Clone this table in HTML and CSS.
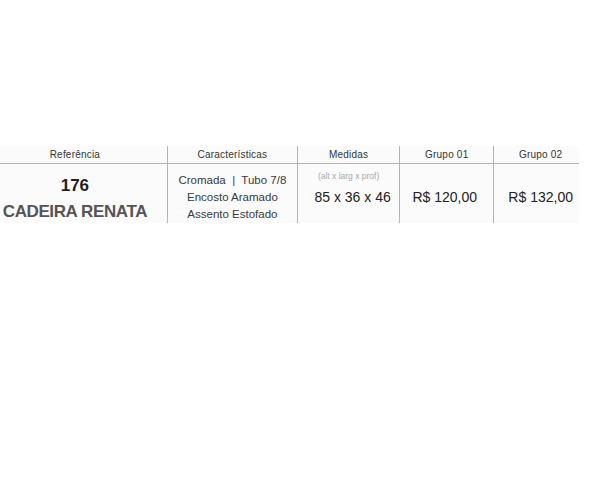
FILE: index.html
```html
<!DOCTYPE html>
<html lang="pt">
<head>
<meta charset="utf-8">
<title>Cadeira Renata</title>
<link rel="stylesheet" href="styles.css">
</head>
<body>
<div class="page">
  <table class="prod">
    <thead>
      <tr>
        <th class="c1">Referência</th>
        <th class="c2">Características</th>
        <th class="c3">Medidas</th>
        <th class="c4">Grupo 01</th>
        <th class="c5">Grupo 02</th>
      </tr>
    </thead>
    <tbody>
      <tr>
        <td class="c1">
          <div class="ref-num">176</div>
          <div class="ref-name">CADEIRA RENATA</div>
        </td>
        <td class="c2">
          <div class="feats">
            <div class="feat">Cromada &nbsp;|&nbsp; Tubo 7/8</div>
            <div class="feat">Encosto Aramado</div>
            <div class="feat">Assento Estofado</div>
          </div>
        </td>
        <td class="c3">
          <div class="dim-label">(alt x larg x prof)</div>
          <div class="dim">85 x 36 x 46</div>
        </td>
        <td class="c4"><div class="price price-left">R$ 120,00</div></td>
        <td class="c5"><div class="price">R$ 132,00</div></td>
      </tr>
    </tbody>
  </table>
</div>
</body>
</html>
```
FILE: styles.css
```css
html, body {
  margin: 0;
  padding: 0;
  background: #ffffff;
}
body {
  font-family: "Liberation Sans", Arial, sans-serif;
  color: #333;
}
.page {
  padding-top: 146px;
}
.prod {
  border-collapse: collapse;
  table-layout: fixed;
  width: 579px;
  background: #fbfbfb;
}
.prod th, .prod td {
  padding: 0;
  text-align: center;
  vertical-align: top;
}
.prod th + th, .prod td + td {
  border-left: 1px solid #b4b4b4;
}
.c1 { width: 167px; padding-right: 17px !important; box-sizing: border-box; }
.c2 { width: 129px; }
.c3 { width: 101px; }
.c4 { width: 93px; }
.c5 { width: 85px; padding-left: 8px !important; box-sizing: border-box; }

.prod th {
  font-weight: normal;
  font-size: 10px;
  letter-spacing: 0.2px;
  line-height: 17px;
  height: 17px;
  color: #333;
  border-bottom: 1px solid #b4b4b4;
  white-space: nowrap;
}
.prod td {
  height: 58px;
}
.ref-num {
  margin-top: 12px;
  font-size: 17px;
  font-weight: bold;
  line-height: 20px;
  color: #1e1e1e;
}
.ref-name {
  margin-top: 6px;
  font-size: 17px;
  font-weight: bold;
  line-height: 20px;
  letter-spacing: -0.4px;
  color: #555;
  white-space: nowrap;
}
.feats {
  padding-top: 8px;
}
.feat {
  font-size: 11.5px;
  line-height: 17px;
  color: #3a3a3a;
  white-space: nowrap;
}
.dim-label {
  margin-top: 6px;
  font-size: 8.5px;
  line-height: 12px;
  color: #aaa;
}
.dim {
  margin-top: 6px;
  padding-left: 8px;
  font-size: 14px;
  line-height: 18px;
  color: #222;
}
.price {
  margin-top: 24px;
  font-size: 14px;
  line-height: 18px;
  color: #222;
  white-space: nowrap;
}
.price-left {
  padding-right: 4px;
}
```
